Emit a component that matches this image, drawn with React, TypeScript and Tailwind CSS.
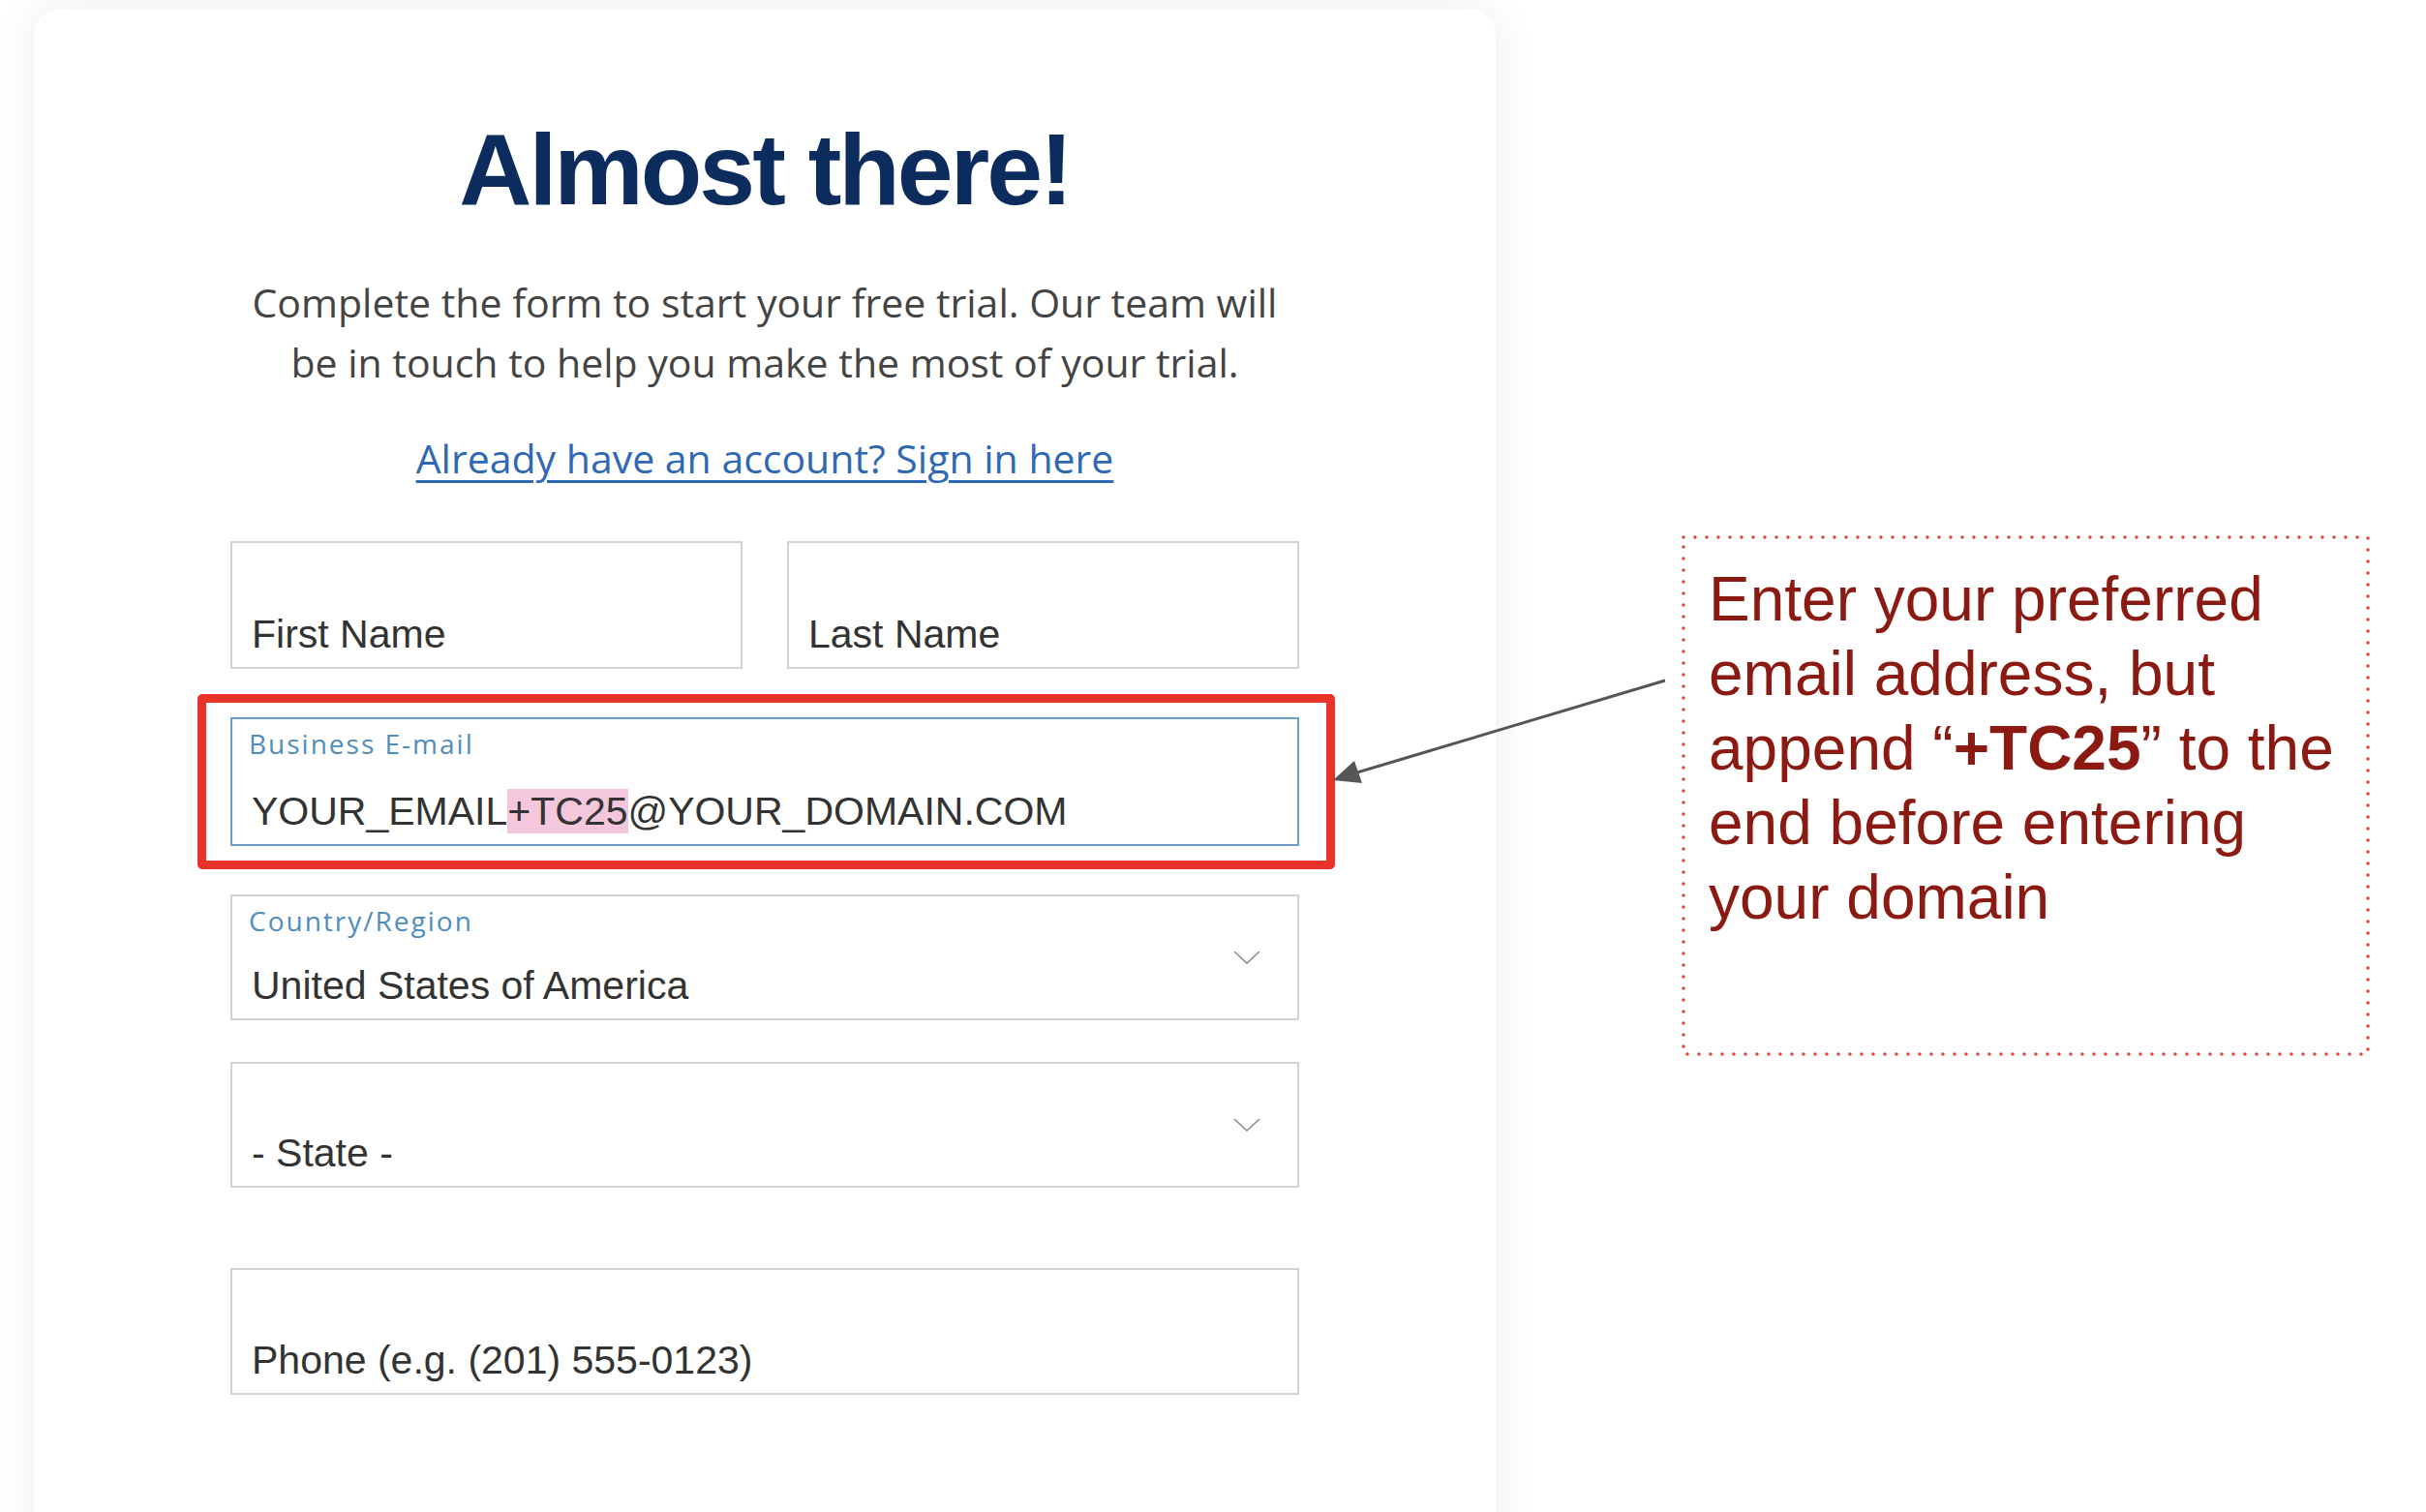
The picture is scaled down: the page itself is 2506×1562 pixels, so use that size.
import React from "react";

const ARIAL = "font-['Liberation_Sans',Arial,sans-serif]";
const SANS = "font-['Open_Sans','Noto_Sans',sans-serif]";

function Chevron() {
  return (
    <svg
      className="absolute right-[38px] top-1/2 -translate-y-1/2"
      width="28"
      height="14"
      viewBox="0 0 28 14"
      fill="none"
    >
      <polyline points="1,1 14,13 27,1" stroke="#8c8c8c" strokeWidth="1.6" />
    </svg>
  );
}

interface FieldProps {
  label?: string;
  children: React.ReactNode;
  select?: boolean;
  focused?: boolean;
  className?: string;
}

function Field({ label, children, select, focused, className = "" }: FieldProps) {
  return (
    <div
      className={`relative flex flex-col border-2 bg-white pb-[11px] pl-[20px] ${
        focused ? "border-[#6b9cc6]" : "border-[#d3d3d3]"
      } ${className}`}
    >
      {label && (
        <span className={`${SANS} ml-[-3px] mt-[9px] text-[28px] leading-[32px] tracking-[2px] text-[#4f8dbd]`}>
          {label}
        </span>
      )}
      <span className={`${ARIAL} mt-auto text-[41px] leading-[46px] text-[#333333]`}>{children}</span>
      {select && <Chevron />}
    </div>
  );
}

export default function App() {
  return (
    <div className="relative h-[1562px] w-[2506px] overflow-hidden bg-white">
      <div className="flex items-start">
        {/* signup card */}
        <div className="ml-[35px] mt-[10px] h-[1640px] w-[1510px] shrink-0 rounded-[25px] bg-white shadow-[0_0_45px_rgba(0,0,0,0.08)]">
          <div className="mx-auto flex w-[1104px] flex-col items-center pt-[113px]">
            <h1 className={`${ARIAL} text-[104px] font-bold leading-none tracking-[-3px] text-[#0d2c5e]`}>
              Almost there!
            </h1>
            <p className={`${SANS} mt-[54px] text-center text-[41px] leading-[62px] text-[#444444]`}>
              Complete the form to start your free trial. Our team will
              <br />
              be in touch to help you make the most of your trial.
            </p>
            <a
              href="#"
              className={`${SANS} mt-[37px] text-[41px] leading-[62px] text-[#2f69b4] underline decoration-[3px] underline-offset-[7px]`}
            >
              Already have an account? Sign in here
            </a>

            <div className="mt-[55px] grid w-full grid-cols-2 gap-x-[46px]">
              <Field className="h-[132px]">First Name</Field>
              <Field className="h-[132px]">Last Name</Field>
            </div>

            <div className="relative mt-[50px] w-full">
              <Field label="Business E-mail" focused className="h-[133px]">
                YOUR_EMAIL<span className="bg-[#f4c7dd]">+TC25</span>@YOUR_DOMAIN.COM
              </Field>
              {/* highlight frame */}
              <div className="pointer-events-none absolute -bottom-[24px] -left-[34px] -right-[37px] -top-[24px] rounded-[5px] border-[9px] border-[#e8332a]" />
            </div>

            <Field label="Country/Region" select className="mt-[50px] h-[130px] w-full">
              United States of America
            </Field>
            <Field select className="mt-[43px] h-[130px] w-full">
              - State -
            </Field>
            <Field className="mt-[83px] h-[131px] w-full">Phone (e.g. (201) 555-0123)</Field>
          </div>
        </div>

        {/* callout */}
        <div className="relative ml-[192px] mt-[553px] h-[538px] w-[711px] shrink-0 pl-[28px] pt-[28px]">
          <svg className="absolute inset-0" width="711" height="538" viewBox="0 0 711 538" fill="none">
            <rect
              x="2"
              y="2"
              width="707"
              height="534"
              stroke="#e8402f"
              strokeWidth="3.5"
              strokeLinecap="round"
              strokeDasharray="0 12"
            />
          </svg>
          <p className={`${ARIAL} text-[64px] leading-[77px] text-[#8b1a12]`}>
            Enter your preferred
            <br />
            email address, but
            <br />
            append “<b>+TC25</b>” to the
            <br />
            end before entering
            <br />
            your domain
          </p>
        </div>
      </div>

      {/* arrow from callout to email field */}
      <svg className="pointer-events-none absolute left-0 top-0" width="2506" height="1562" viewBox="0 0 2506 1562" fill="none">
        <line x1="1720" y1="703" x2="1402" y2="798" stroke="#565656" strokeWidth="3" />
        <polygon points="1377,806 1407,809 1399,786" fill="#565656" />
      </svg>
    </div>
  );
}
